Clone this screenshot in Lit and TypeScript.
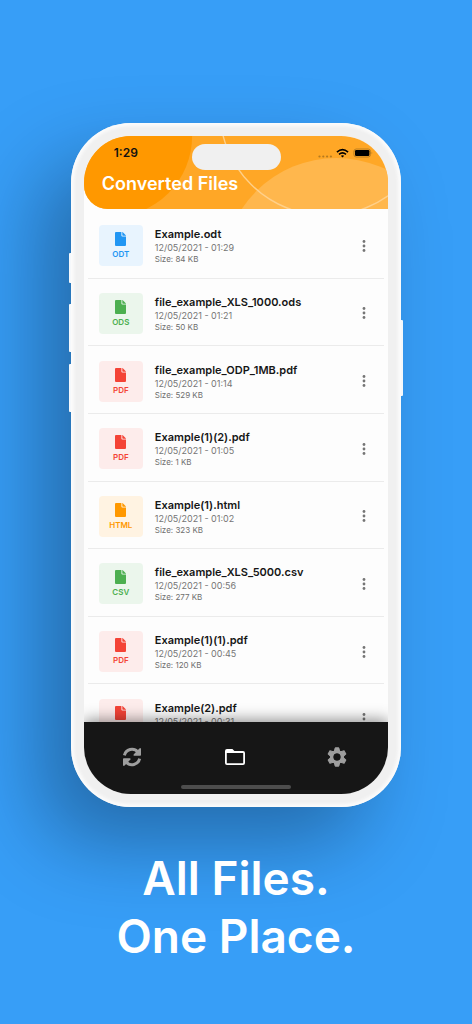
import { LitElement, html, svg, css } from "lit";
import { customElement, property } from "lit/decorators.js";
import { classMap } from "lit/directives/class-map.js";

interface ConvertedFile {
  name: string;
  date: string;
  size: string;
  type: string;
}

const FILES: ConvertedFile[] = [
  { name: "Example.odt", date: "12/05/2021 - 01:29", size: "84 KB", type: "ODT" },
  { name: "file_example_XLS_1000.ods", date: "12/05/2021 - 01:21", size: "50 KB", type: "ODS" },
  { name: "file_example_ODP_1MB.pdf", date: "12/05/2021 - 01:14", size: "529 KB", type: "PDF" },
  { name: "Example(1)(2).pdf", date: "12/05/2021 - 01:05", size: "1 KB", type: "PDF" },
  { name: "Example(1).html", date: "12/05/2021 - 01:02", size: "323 KB", type: "HTML" },
  { name: "file_example_XLS_5000.csv", date: "12/05/2021 - 00:56", size: "277 KB", type: "CSV" },
  { name: "Example(1)(1).pdf", date: "12/05/2021 - 00:45", size: "120 KB", type: "PDF" },
  { name: "Example(2).pdf", date: "12/05/2021 - 00:31", size: "96 KB", type: "PDF" },
];

@customElement("file-row")
export class FileRow extends LitElement {
  @property({ attribute: false }) file!: ConvertedFile;

  static styles = css`
    :host {
      display: flex;
      align-items: center;
      gap: 12px;
      padding: 3px 14px 0 11px;
      border-bottom: 1px solid #ebebeb;
      box-sizing: border-box;
      min-height: 0;
    }
    .tile {
      display: flex;
      flex-direction: column;
      align-items: center;
      justify-content: center;
      gap: 3px;
      flex: none;
      width: 44px;
      height: 41px;
      border-radius: 4px;
      font-size: 8px;
      line-height: 10px;
      font-weight: 600;
    }
    .glyph {
      width: 11px;
      height: 14px;
      fill: currentColor;
    }
    .odt { color: #2196f3; background: #e8f4fe; }
    .ods, .csv { color: #4caf50; background: #ebf6ec; }
    .pdf { color: #f44336; background: #fdeceb; }
    .html { color: #ff9800; background: #fff3e2; }
    .info {
      flex: 1;
      min-width: 0;
      padding-top: 1px;
      white-space: nowrap;
    }
    .name, .date, .size { margin: 0; }
    .name {
      font-size: 11px;
      line-height: 14px;
      font-weight: 600;
      color: #161616;
    }
    .date {
      font-size: 9px;
      line-height: 13px;
      color: #757575;
    }
    .size {
      font-size: 8px;
      line-height: 11px;
      color: #6e6e6e;
    }
    .more {
      display: flex;
      padding: 4px;
      border: 0;
      background: none;
      cursor: pointer;
    }
    .dots {
      width: 4px;
      height: 14px;
      fill: #757575;
    }
  `;

  render() {
    const f = this.file;
    const type = f.type.toLowerCase();
    return html`
      <div class=${classMap({ tile: true, [type]: true })}>
        <svg class="glyph" viewBox="0 0 11 14" aria-hidden="true">
          <path d="M1 0H6.4V3.6Q6.4 4.6 7.4 4.6H11V13Q11 14 10 14H1Q0 14 0 13V1Q0 0 1 0Z" />
          <path d="M7.3 0H7.6L11 3.4V3.7H7.9Q7.3 3.7 7.3 3.1Z" />
        </svg>
        <span>${f.type}</span>
      </div>
      <div class="info">
        <h2 class="name">${f.name}</h2>
        <p class="date">${f.date}</p>
        <p class="size">Size: ${f.size}</p>
      </div>
      <button class="more" aria-label="Options for ${f.name}">
        <svg class="dots" viewBox="0 0 4 14" aria-hidden="true">
          <circle cx="2" cy="2.5" r="1.4" />
          <circle cx="2" cy="7" r="1.4" />
          <circle cx="2" cy="11.5" r="1.4" />
        </svg>
      </button>
    `;
  }
}

const teeth = [0, 60, 120, 180, 240, 300].map(
  (a) => svg`<path d="M-1.8 -9.2H1.8L2.8 -5H-2.8Z" stroke-width="1" stroke-linejoin="round" transform="rotate(${a})" />`
);

@customElement("app-root")
export class AppRoot extends LitElement {
  static styles = css`
    :host {
      display: block;
      min-height: 100vh;
      box-sizing: border-box;
      padding-top: 123px;
      background: #379ef7;
      overflow: hidden;
      font-family: Inter, "Open Sans", sans-serif;
    }
    .page {
      display: flex;
      flex-direction: column;
      align-items: center;
      gap: 42px;
    }
    .phone {
      position: relative;
      box-sizing: border-box;
      width: 70%;
      min-height: 0;
      aspect-ratio: 330 / 683;
      padding: 13px;
      border-radius: 60px;
      background: #f0f0f0;
      box-shadow:
        inset 0 0 3px 3px #fbfbfb,
        -34px 38px 80px -2px rgba(4, 14, 30, 0.34);
    }
    .key {
      position: absolute;
      width: 2px;
      background: #f5f8fb;
    }
    .left { right: 100%; border-radius: 1px 0 0 1px; }
    .right { left: 100%; border-radius: 0 1px 1px 0; }
    .mute { top: 19%; height: 30px; }
    .up { top: 26.5%; height: 48px; }
    .down { top: 35.3%; height: 48px; }
    .power { top: 28.8%; height: 76px; }
    .screen {
      display: flex;
      flex-direction: column;
      height: 100%;
      border-radius: 47px;
      overflow: hidden;
      background: #fdfdfd;
    }
    .header {
      position: relative;
      flex: none;
      display: flex;
      flex-direction: column;
      gap: 3px;
      height: 73px;
      box-sizing: border-box;
      padding: 8px 15px 0 18px;
      border-bottom-left-radius: 24px;
      overflow: hidden;
      background: #ffa726;
    }
    .art {
      position: absolute;
      inset: 0;
      width: 100%;
      height: 100%;
    }
    .island {
      position: absolute;
      top: 8px;
      left: 50%;
      width: 89px;
      height: 26px;
      margin-left: -44px;
      border-radius: 13px;
      background: #f0f0f0;
    }
    .status {
      position: relative;
      display: flex;
      align-items: center;
      justify-content: space-between;
      height: 18px;
      padding-left: 12px;
    }
    .time {
      font-size: 12px;
      line-height: 18px;
      font-weight: 600;
      color: #111;
    }
    .signals {
      width: 55px;
      height: 10px;
    }
    .title {
      position: relative;
      margin: 0;
      font-size: 18px;
      line-height: 38px;
      font-weight: 600;
      color: #fff;
    }
    .list {
      flex: 1;
      min-height: 0;
      margin: 0;
      padding: 2px 4px 0;
      overflow: hidden;
    }
    .rows {
      display: grid;
      grid-auto-rows: 1fr;
      height: 541px;
    }
    .nav {
      position: relative;
      flex: none;
      display: flex;
      justify-content: space-between;
      height: 72px;
      box-sizing: border-box;
      padding: 19px 34px 21px 31px;
      background: #161616;
      box-shadow: 0 -2px 14px rgba(0, 0, 0, 0.45);
    }
    .tab {
      display: flex;
      align-items: center;
      justify-content: center;
      width: 34px;
      height: 32px;
      padding: 0;
      border: 0;
      background: none;
      color: #9e9e9e;
      cursor: pointer;
    }
    .active { color: #fff; }
    .icon {
      width: 22px;
      height: 22px;
      fill: currentColor;
    }
    .home {
      position: absolute;
      bottom: 5px;
      left: 32%;
      right: 32%;
      height: 4px;
      border-radius: 2px;
      background: #4d4d4d;
    }
    .slogan {
      z-index: 1;
      margin: 0;
      text-align: center;
      font-size: 46px;
      line-height: 58px;
      font-weight: 600;
      color: #fff;
    }
    .line { display: block; }
  `;

  render() {
    return html`
      <main class="page">
        <div class="phone">
          <span class="key left mute"></span>
          <span class="key left up"></span>
          <span class="key left down"></span>
          <span class="key right power"></span>
          <div class="screen">
            <header class="header">
              <svg class="art" viewBox="0 0 304 73" preserveAspectRatio="none" aria-hidden="true">
                <circle cx="27" cy="0" r="81" fill="#ff9800" />
                <circle cx="252" cy="135" r="113" fill="#ffb74d" />
                <circle cx="242" cy="-27" r="106.5" fill="none" stroke="#ffd08a" stroke-width="1.4" />
              </svg>
              <span class="island"></span>
              <div class="status">
                <span class="time">1:29</span>
                <svg class="signals" viewBox="0 0 55 10" aria-hidden="true">
                  <g fill="#b57a20">
                    <circle cx="1.5" cy="8.5" r="1.1" />
                    <circle cx="5.3" cy="8.5" r="1.1" />
                    <circle cx="9.1" cy="8.5" r="1.1" />
                    <circle cx="12.9" cy="8.5" r="1.1" />
                  </g>
                  <g fill="none" stroke="#000" stroke-width="1.6">
                    <path d="M18.9 4.1Q24.5 -0.7 30.1 4.1" />
                    <path d="M21 6.3Q24.5 3.4 28 6.3" />
                  </g>
                  <path d="M22.8 7.8Q24.5 6.6 26.2 7.8L24.5 9.6Z" />
                  <rect x="35.9" y="1" width="16.6" height="8" rx="2.4" fill="none" stroke="#b57a20" stroke-width="0.9" />
                  <rect x="37" y="2" width="14.4" height="6" rx="1.2" />
                  <path d="M53.6 3.6Q55 5 53.6 6.4Z" fill="#b57a20" />
                </svg>
              </div>
              <h1 class="title">Converted Files</h1>
            </header>
            <section class="list" aria-label="Converted files">
              <div class="rows">
                ${FILES.map((f) => html`<file-row .file=${f}></file-row>`)}
              </div>
            </section>
            <nav class="nav">
              <button class="tab" aria-label="Convert">
                <svg class="icon" viewBox="0 0 22 22" aria-hidden="true">
                  <g fill="none" stroke="currentColor" stroke-width="3">
                    <path d="M3.4 9.4A7.7 7.7 0 0 1 16.8 6" />
                    <path d="M18.6 12.6A7.7 7.7 0 0 1 5.2 16" />
                  </g>
                  <path d="M20 2.2V9Q20 9.8 19.2 9.8H12.6V8.4L18.6 2.2Z" />
                  <path d="M2 19.8V13Q2 12.2 2.8 12.2H9.4V13.6L3.4 19.8Z" />
                </svg>
              </button>
              <button class="tab active" aria-label="Files" aria-current="page">
                <svg class="icon" viewBox="0 0 22 22" aria-hidden="true">
                  <path
                    fill-rule="evenodd"
                    d="M4 3H9.4L11.4 5H20Q22 5 22 7V17Q22 19 20 19H4Q2 19 2 17V5Q2 3 4 3ZM3.8 7V17.2H20.2V7Z"
                  />
                </svg>
              </button>
              <button class="tab" aria-label="Settings">
                <svg class="icon" viewBox="-11 -11 22 22" aria-hidden="true">
                  <circle r="5.2" fill="none" stroke="currentColor" stroke-width="3.6" />
                  <g stroke="currentColor">${teeth}</g>
                  <circle r="3.5" fill="#161616" />
                </svg>
              </button>
              <span class="home"></span>
            </nav>
          </div>
        </div>
        <p class="slogan">
          <span class="line">All Files.</span>
          <span class="line">One Place.</span>
        </p>
      </main>
    `;
  }
}
